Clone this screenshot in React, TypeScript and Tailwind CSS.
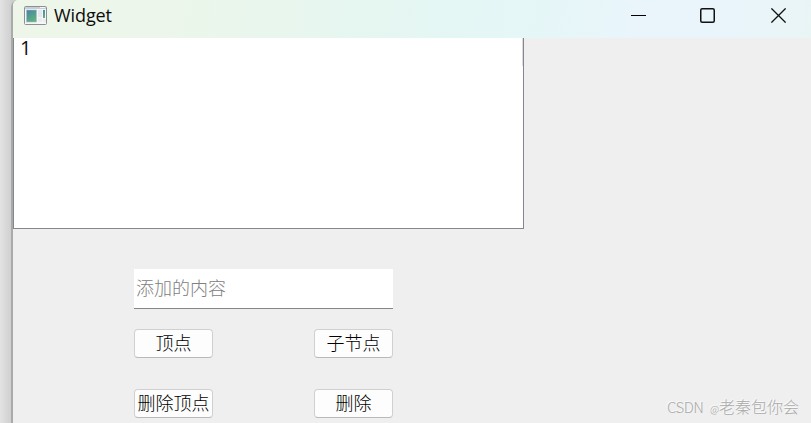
import React, { useState } from 'react';

const UI_FONT = "font-['Noto_Sans_CJK_SC',sans-serif]";

const WidgetIcon: React.FC = () => (
    <svg width="23" height="19" viewBox="0 0 23 19" className="shrink-0">
        <defs>
            <linearGradient id="pane" x1="0" y1="0" x2="0.6" y2="1">
                <stop offset="0" stopColor="#4682aa" />
                <stop offset="1" stopColor="#5fb37c" />
            </linearGradient>
        </defs>
        <rect x="0.5" y="0.5" width="22" height="18" rx="1" fill="#f6f6f8" stroke="#8b9096" />
        <rect x="1" y="1" width="21" height="2" fill="#c8ced6" />
        <rect x="16" y="1" width="5" height="1" fill="#f4f6f8" />
        <rect x="2.5" y="4" width="10" height="12" fill="url(#pane)" stroke="#a9bfcb" strokeWidth="0.6" />
        <rect x="14" y="4" width="4" height="7" fill="#e6e7ea" />
        <rect x="14" y="12" width="4" height="4" fill="#ebecef" />
        <rect x="19" y="4" width="2" height="8" fill="url(#pane)" />
        <rect x="19" y="13" width="3" height="3" fill="#ebecef" />
    </svg>
);

const TitleBar: React.FC = () => (
    <header className="flex h-[38px] shrink-0 rounded-tl-[5px] bg-[linear-gradient(100deg,#edf6e9_0%,#ecf6ea_20%,#e6f6f0_42%,#e4f7f6_60%,#e9f5fb_78%,#e9f5fa_90%,#e9f5f5_100%)] pl-[11px]">
        <div className="flex h-[30px] flex-1 items-center gap-[7px]">
            <WidgetIcon />
            <h1 className="font-['Open_Sans',sans-serif] text-[18px] leading-6 tracking-[-0.1px] text-[#0c0c0c]">Widget</h1>
        </div>
        <div className="flex h-[31px] items-center pr-px">
            <button aria-label="Minimize" className="flex w-[70px] justify-center">
                <svg width="15" height="15" viewBox="0 0 15 15"><path d="M0 7.5H15" stroke="#000" /></svg>
            </button>
            <button aria-label="Maximize" className="flex w-[68px] justify-center">
                <svg width="15" height="15" viewBox="0 0 15 15" fill="none"><rect x="0.75" y="0.75" width="13.5" height="13.5" rx="1.5" stroke="#111" strokeWidth="1.5" /></svg>
            </button>
            <button aria-label="Close" className="flex w-[69px] justify-center pl-[5px]">
                <svg width="15" height="15" viewBox="0 0 15 15"><path d="M0.4 0.4L14.6 14.6M14.6 0.4L0.4 14.6" stroke="#111" strokeWidth="1.3" /></svg>
            </button>
        </div>
    </header>
);

const PushButton: React.FC<{ label: string }> = ({ label }) => (
    <button className={`flex h-[29px] w-[79px] items-center justify-center whitespace-nowrap rounded-[4px] border border-[#d0d0d0] border-b-[#b9b9b9] bg-[#fdfdfd] pb-[3px] text-[18px] leading-none font-light text-black ${UI_FONT}`}>
        {label}
    </button>
);

const App: React.FC = () => {
    const [content, setContent] = useState('');

    return (
        <div className="flex h-[423px] w-[811px] overflow-hidden bg-[linear-gradient(90deg,#e3e3e3_0px,#cecece_12px)]">
            <div className="ml-[11px] flex flex-1 flex-col rounded-tl-[7px] border-l-2 border-[#aaaaaa] bg-[#efefef]">
                <TitleBar />
                <main className="flex flex-1 flex-col">
                    <div className="flex h-[191px] w-[511px] justify-between border-r border-b border-l border-[#828790] bg-white">
                        <span className="pl-[6px] font-['Open_Sans',sans-serif] text-[20px] leading-[19px] text-[#111]">1</span>
                        <span className="h-7 w-px bg-[#dcdcdc]" />
                    </div>
                    <div className="mt-10 flex justify-between pr-3 pl-[121px]">
                        <div className="flex w-[259px] flex-col">
                            <input
                                value={content}
                                onChange={e => setContent(e.target.value)}
                                placeholder="添加的内容"
                                className={`h-10 w-full border-b border-[#868686] bg-white px-[2px] pb-[3px] text-[18px] font-light text-[#111] outline-none placeholder:text-[#808080] ${UI_FONT}`}
                            />
                            <div className="mt-5 grid grid-cols-[79px_79px] justify-between gap-y-[31px]">
                                <PushButton label="顶点" />
                                <PushButton label="子节点" />
                                <PushButton label="删除顶点" />
                                <PushButton label="删除" />
                            </div>
                        </div>
                        <p className="-mb-px self-end font-['Noto_Sans_CJK_SC',sans-serif] text-[16px] leading-5 font-light whitespace-pre text-[#aaaaaa] [text-shadow:-1px_-1px_0_#fafafa]">
                            <span className="inline-block w-[43px] text-[15px] tracking-[-0.5px]">CSDN</span>
                            <span className="inline-block w-[9px] text-[10px]">@</span>老秦包你会
                        </p>
                    </div>
                </main>
            </div>
        </div>
    );
};

export default App;
